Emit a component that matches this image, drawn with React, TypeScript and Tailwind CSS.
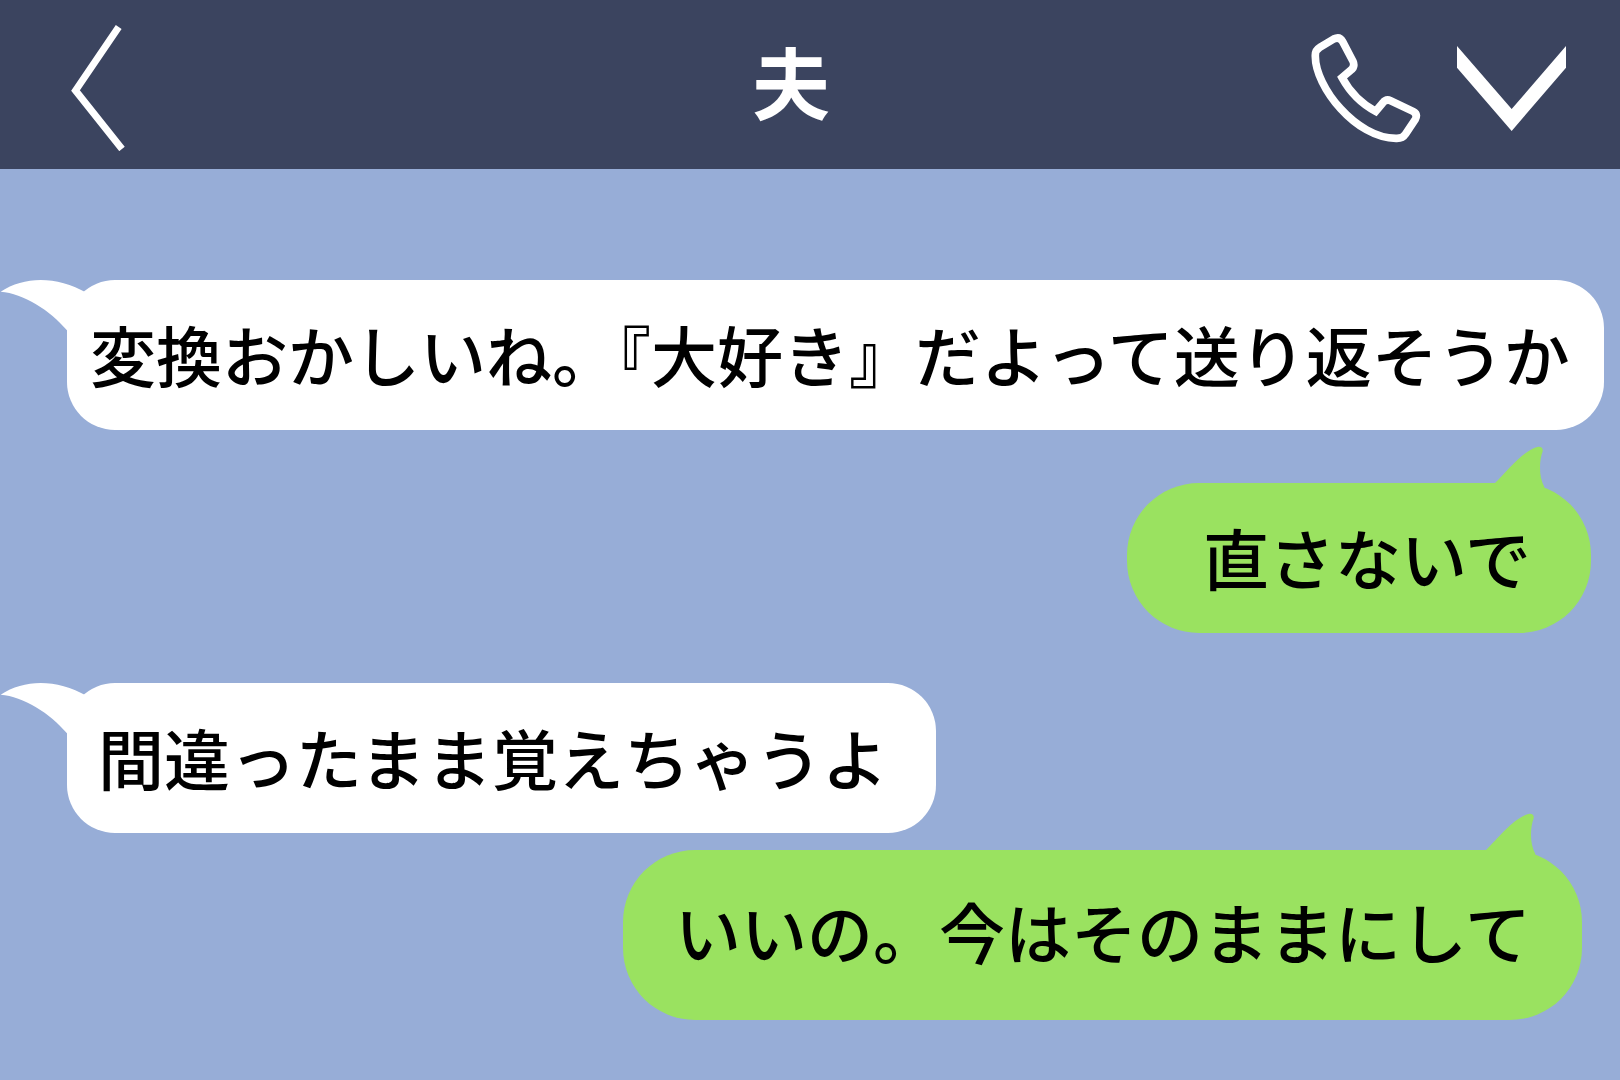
import React from 'react';
import { clsx } from 'clsx';

type Message = {
  id: number;
  from: 'partner' | 'me';
  text: string;
  className: string;
};

const messages: Message[] = [
  { id: 1, from: 'partner', text: '変換おかしいね。『大好き』だよって送り返そうか', className: 'min-h-[150px] pb-[5px] pl-[23px] pr-[34px]' },
  { id: 2, from: 'me', text: '直さないで', className: 'mt-[53px] mr-[29px] min-h-[150px] pb-[5px] pl-[76px] pr-[60px]' },
  { id: 3, from: 'partner', text: '間違ったまま覚えちゃうよ', className: 'mt-[50px] min-h-[150px] pb-[5px] pl-[31px] pr-12' },
  { id: 4, from: 'me', text: 'いいの。今はそのままにして', className: 'mt-[17px] mr-[38px] min-h-[170px] pb-[10px] pl-[52px] pr-[51px]' },
];

function PartnerTail() {
  return (
    <svg className="absolute top-0 -left-[67px] w-[100px] h-[52px]" viewBox="0 60 300 156" fill="white" aria-hidden="true">
      <path d="M2 95C75 48 170 48 261 99L300 213H203C150 150 70 100 2 95Z" />
    </svg>
  );
}

function MyTail() {
  return (
    <svg className="absolute -top-[37px] right-[46px] w-[50px] h-[42px]" viewBox="1125 48 150 126" fill="#9ae260" aria-hidden="true">
      <path d="M1125 159C1160 125 1210 60 1255 50Q1270 49 1268 64C1258 90 1255 140 1273 171V174H1125Z" />
    </svg>
  );
}

function Bubble({ message }: { message: Message }) {
  const mine = message.from === 'me';
  return (
    <li
      className={clsx(
        'relative flex items-center w-fit',
        mine ? 'self-end bg-[#9ae260] rounded-[72px]' : 'ml-[67px] bg-white rounded-[48px]',
        message.className
      )}
    >
      {mine ? <MyTail /> : <PartnerTail />}
      <p className="relative text-[66px] leading-[96px] font-medium text-black">{message.text}</p>
    </li>
  );
}

export default function App() {
  return (
    <div className="min-h-screen bg-[#97add7] font-['Noto_Sans_CJK_JP',sans-serif]" lang="ja">
      <header className="grid grid-cols-[1fr_auto_1fr] items-center min-h-[169px] pt-[7px] pl-4 pr-[54px] bg-[#3b445f] text-white">
        <button type="button" aria-label="戻る" className="justify-self-start ml-[55px] cursor-pointer">
          <svg className="block w-[54px] h-[126px]" viewBox="0 0 54 126" fill="none" stroke="currentColor" strokeWidth="7">
            <path d="M47.7 2L4.5 65.5L51 124" />
          </svg>
        </button>

        <h1 className="pb-4 text-[78px] leading-[116px] font-bold">夫</h1>

        <div className="flex items-center gap-9 justify-self-end">
          <button type="button" aria-label="通話" className="cursor-pointer">
            <svg className="block w-[110px] h-[110px]" viewBox="95 69 330 330" fill="none" stroke="currentColor" strokeWidth="23">
              <path d="M122 112L163 87Q181 78 190 95L221 154Q228 170 214 181L188 203C210 243 247 282 289 304L310 279Q320 266 334 272L401 304Q416 312 408 328L378 373Q370 386 350 385C230 385 107 230 108 138Q107 121 122 112Z" />
            </svg>
          </button>
          <button type="button" aria-label="メニュー" className="cursor-pointer">
            <svg className="block w-[109px] h-[85px]" viewBox="533 107 327 255" fill="currentColor">
              <path d="M533 107L697 296L860 107V172L697 362L533 172Z" />
            </svg>
          </button>
        </div>
      </header>

      <main>
        <ul className="flex flex-col pt-[111px] pb-[60px]">
          {messages.map((message) => (
            <Bubble key={message.id} message={message} />
          ))}
        </ul>
      </main>
    </div>
  );
}
